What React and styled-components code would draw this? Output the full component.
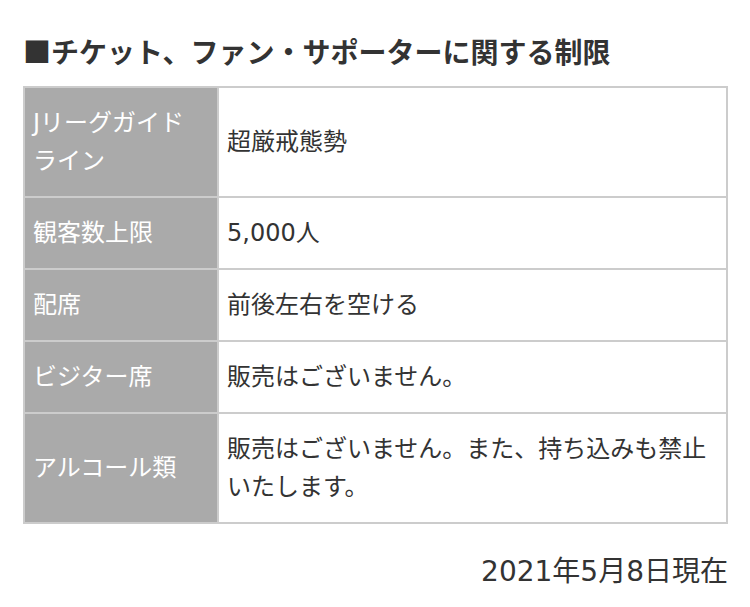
import React from 'react';
import styled, { createGlobalStyle } from 'styled-components';

const rows = [
  { label: 'Jリーグガイドライン', value: '超厳戒態勢' },
  { label: '観客数上限', value: '5,000人' },
  { label: '配席', value: '前後左右を空ける' },
  { label: 'ビジター席', value: '販売はございません。' },
  { label: 'アルコール類', value: '販売はございません。また、持ち込みも禁止いたします。' },
];

const App = () => (
  <Page>
    <GlobalStyle />
    <Heading>■チケット、ファン・サポーターに関する制限</Heading>
    <Table>
      <colgroup>
        <col style={{ width: 194 }} />
        <col />
      </colgroup>
      <tbody>
        {rows.map((row) => (
          <tr key={row.label}>
            <Label>{row.label}</Label>
            <Value>{row.value}</Value>
          </tr>
        ))}
      </tbody>
    </Table>
    <AsOf>2021年5月8日現在</AsOf>
  </Page>
);

const GlobalStyle = createGlobalStyle`
  body {
    margin: 0;
    background: #fff;
    font-family: "DejaVu Sans", "Noto Sans CJK JP", sans-serif;
    color: #333;
  }
`;

const Page = styled.div`
  padding: 32px 22px 0 23px;
`;

const Heading = styled.h2`
  margin: 0 0 16px;
  font-family: "Noto Sans CJK JP", sans-serif;
  font-size: 28px;
  line-height: 38px;
  font-weight: 700;
  color: #333;
  white-space: nowrap;
`;

const Table = styled.table`
  width: 100%;
  table-layout: fixed;
  border-collapse: collapse;
  border: 2px solid #ccc;
`;

const Cell = styled.td`
  border: 2px solid #ccc;
  padding: 16px 8px;
  font-size: 24px;
  line-height: 38px;
  vertical-align: middle;
  text-align: left;
  font-weight: 400;
`;

const Label = styled(Cell).attrs({ as: 'th' })`
  padding-right: 18px;
  background: #aaa;
  color: #fff;
`;

const Value = styled(Cell)`
  background: #fff;
  color: #333;
`;

const AsOf = styled.p`
  margin: 28px 0 0;
  text-align: right;
  font-size: 28px;
  line-height: 40px;
  color: #333;
`;

export default App;
